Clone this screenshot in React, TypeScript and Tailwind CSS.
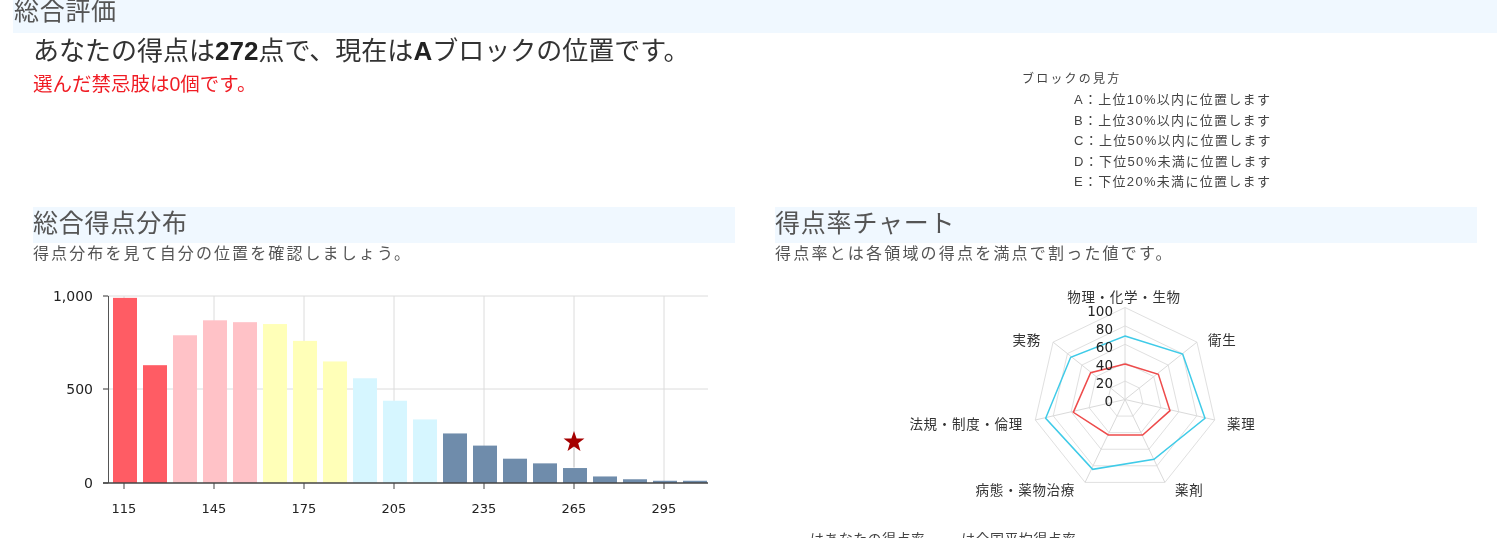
const FONT = "font-['Liberation_Sans','Noto_Sans_CJK_JP',sans-serif]";
const CHART_FONT = "'DejaVu Sans','Noto Sans CJK JP',sans-serif";

const bars: [number, string][] = [
  [990, "#ff5c64"], [630, "#ff5c64"], [790, "#ffc2c7"], [870, "#ffc2c7"], [860, "#ffc2c7"],
  [850, "#ffffb8"], [760, "#ffffb8"], [650, "#ffffb8"], [560, "#d6f6ff"], [440, "#d6f6ff"],
  [340, "#d6f6ff"], [265, "#6f8cab"], [200, "#6f8cab"], [130, "#6f8cab"], [105, "#6f8cab"],
  [80, "#6f8cab"], [35, "#6f8cab"], [20, "#6f8cab"], [12, "#6f8cab"], [12, "#6f8cab"],
];

function BarChart() {
  const x0 = 83;
  const top = 17;
  const base = 204;
  const h = base - top;
  const ticks = [115, 145, 175, 205, 235, 265, 295];
  const starCx = 541;
  const starCy = 163;
  const star = Array.from({ length: 10 }, (_, i) => {
    const r = i % 2 === 0 ? 11 : 4.4;
    const a = (-90 + i * 36) * (Math.PI / 180);
    return `${starCx + r * Math.cos(a)},${starCy + r * Math.sin(a)}`;
  }).join(" ");
  return (
    <svg width="702" height="259" className="block" fontFamily={CHART_FONT}>
      {ticks.map((t, i) => (
        <line key={t} x1={91 + i * 90} x2={91 + i * 90} y1={top} y2={base} stroke="#dcdcdc" />
      ))}
      <line x1={70} x2={675} y1={top} y2={top} stroke="#dcdcdc" />
      <line x1={70} x2={675} y1={110} y2={110} stroke="#dcdcdc" />
      {bars.map(([v, c], i) => (
        <rect key={i} x={x0 - 3 + i * 30} y={base - (v / 1000) * h} width={24} height={(v / 1000) * h} fill={c} />
      ))}
      <line x1={75.5} x2={75.5} y1={top} y2={base} stroke="#555" />
      <line x1={70} x2={675} y1={204} y2={204} stroke="#444" strokeWidth="1.5" />
      {[top, 110, base].map((y) => (
        <line key={y} x1={70} x2={75} y1={y} y2={y} stroke="#444" />
      ))}
      {ticks.map((t, i) => (
        <g key={t}>
          <line x1={91 + i * 90} x2={91 + i * 90} y1={base} y2={base + 6} stroke="#444" />
          <text x={91 + i * 90} y={234} textAnchor="middle" fontSize="13" fill="#222">{t}</text>
        </g>
      ))}
      <text x={60} y={22} textAnchor="end" fontSize="14" fill="#222">1,000</text>
      <text x={60} y={115} textAnchor="end" fontSize="14" fill="#222">500</text>
      <text x={60} y={209} textAnchor="end" fontSize="14" fill="#222">0</text>
      <line x1={starCx} x2={starCx} y1={starCy} y2={base - 16} stroke="#ccc" />
      <polygon points={star} fill="#a50000" />
    </svg>
  );
}

function RadarChart() {
  const cx = 350;
  const cy = 120.5;
  const R = 92;
  const pt = (i: number, r: number) => {
    const a = (-90 + (i * 360) / 7) * (Math.PI / 180);
    return [cx + r * Math.cos(a), cy + r * Math.sin(a)];
  };
  const ring = (r: number) => Array.from({ length: 7 }, (_, i) => pt(i, r).join(",")).join(" ");
  const toPts = (l: number[][]) => l.map(([x, y]) => `${x / 3 + 105},${y / 3 + 1}`).join(" ");
  const blue = [[735, 168], [908, 222], [975, 415], [822, 538], [638, 568], [497, 415], [572, 232]];
  const red = [[735, 252], [835, 283], [870, 392], [788, 465], [685, 465], [580, 397], [632, 278]];
  const labels: [string, number, number, "middle" | "start" | "end"][] = [
    ["物理・化学・生物", 349, 23, "middle"],
    ["衛生", 433, 66, "start"],
    ["薬理", 452, 150, "start"],
    ["薬剤", 400, 216, "start"],
    ["病態・薬物治療", 300, 216, "end"],
    ["法規・制度・倫理", 248, 150, "end"],
    ["実務", 266, 66, "end"],
  ];
  return (
    <svg width="702" height="252" className="block" fontFamily={CHART_FONT}>
      {[0.2, 0.4, 0.6, 0.8, 1].map((f) => (
        <polygon key={f} points={ring(R * f)} fill="none" stroke="#e0e0e0" />
      ))}
      {Array.from({ length: 7 }, (_, i) => {
        const [x, y] = pt(i, R);
        return <line key={i} x1={cx} y1={cy} x2={x} y2={y} stroke="#dadada" />;
      })}
      <polygon points={toPts(blue)} fill="none" stroke="#3fcbe8" strokeWidth="1.5" />
      <polygon points={toPts(red)} fill="none" stroke="#ee4b4b" strokeWidth="1.5" />
      {[100, 80, 60, 40, 20, 0].map((v, i) => (
        <text key={v} x={338} y={37 + i * 18} textAnchor="end" fontSize="13.5" fill="#222">{v}</text>
      ))}
      {labels.map(([t, x, y, a]) => (
        <text key={t} x={x} y={y} textAnchor={a} fontSize="13.5" letterSpacing="0.7" fill="#333">{t}</text>
      ))}
    </svg>
  );
}

function SectionTitle({ children }: { children: string }) {
  return (
    <h2 className="h-9 bg-[#f0f8ff] text-[25px] leading-[33px] tracking-[0.8px] text-[#555]">{children}</h2>
  );
}

const blocks = [
  "A：上位10%以内に位置します",
  "B：上位30%以内に位置します",
  "C：上位50%以内に位置します",
  "D：下位50%未満に位置します",
  "E：下位20%未満に位置します",
];

export default function App() {
  return (
    <div className={`${FONT} relative h-[538px] w-[1510px] overflow-hidden bg-white text-[#333] blur-[0.4px]`}>
      <div className="mx-[13px] h-[33px] bg-[#f0f8ff] pl-px text-[25px] leading-[23px] tracking-[0.7px] text-[#555]">総合評価</div>
      <div className="flex h-[174px]">
        <div className="w-[1009px] pl-[33px]">
          <p className="mt-[2px] text-[26px] leading-[32px] text-[#333]">
            あなたの得点は<b className="text-[#222]">272</b>点で、現在は<b className="text-[#222]">A</b>ブロックの位置です。
          </p>
          <p className="mt-[5px] text-[19.5px] leading-[24px] text-[#f01c24]">選んだ禁忌肢は0個です。</p>
        </div>
        <div className="pl-[13px] pt-[38px] text-[13px] tracking-[1.3px] text-[#444]">
          <p className="text-[12px] leading-[16px] tracking-[2.2px]">ブロックの見方</p>
          <ul className="pl-[52px] pt-[3px]">
            {blocks.map((b) => (
              <li key={b} className="h-[20.5px] leading-[20.5px]">{b}</li>
            ))}
          </ul>
        </div>
      </div>
      <div className="ml-[33px] flex gap-[40px]">
        <section className="w-[702px]">
          <SectionTitle>総合得点分布</SectionTitle>
          <p className="h-9 text-[16px] leading-[21px] tracking-[2.1px] text-[#555]">得点分布を見て自分の位置を確認しましょう。</p>
          <BarChart />
        </section>
        <section className="w-[702px]">
          <SectionTitle>得点率チャート</SectionTitle>
          <p className="h-9 text-[16px] leading-[21px] tracking-[2.2px] text-[#555]">得点率とは各領域の得点を満点で割った値です。</p>
          <RadarChart />
          <p className="flex pl-[35px] text-[14px] leading-[16px] tracking-[0.4px] text-[#444]">
            <span>はあなたの得点率</span>
            <span className="mx-[3px] mt-[8px] h-px w-[30px] bg-[#bbb]" />
            <span>は全国平均得点率</span>
          </p>
        </section>
      </div>
    </div>
  );
}
